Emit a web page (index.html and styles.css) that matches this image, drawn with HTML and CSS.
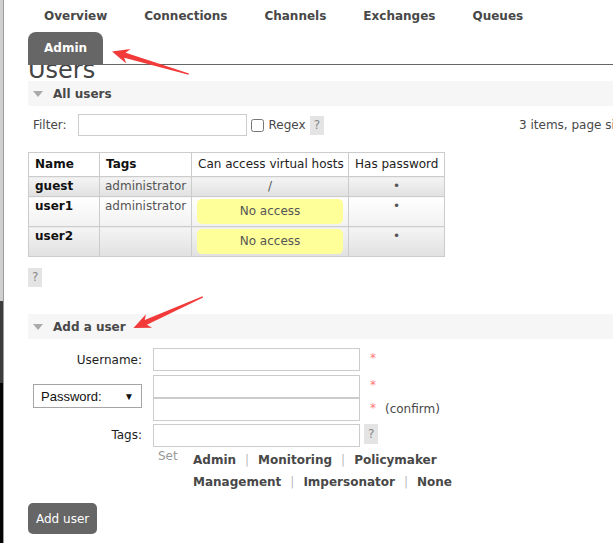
FILE: index.html
```html
<!DOCTYPE html>
<html>
<head>
<meta charset="utf-8">
<link rel="stylesheet" href="styles.css">
</head>
<body>
<div class="edge"></div>
<div class="page">
  <nav class="menu">
    <ul>
      <li><a href="#">Overview</a></li>
      <li><a href="#">Connections</a></li>
      <li><a href="#">Channels</a></li>
      <li><a href="#">Exchanges</a></li>
      <li><a href="#">Queues</a></li>
      <li><a href="#" class="active">Admin</a></li>
    </ul>
  </nav>
  <h1 class="title">Users</h1>

  <section class="section">
    <h2 class="bar"><span class="tri"></span>All users</h2>
    <div class="filter">
      <span>Filter:</span>
      <input class="text filter-input" type="text">
      <input class="check" type="checkbox">
      <span class="regex">Regex</span>
      <span class="help">?</span>
      <span class="count">3 items, page size up to: 100</span>
    </div>
    <table class="list">
      <colgroup>
        <col class="c1"><col class="c2"><col class="c3"><col class="c4">
      </colgroup>
      <thead>
        <tr>
          <th class="b">Name</th>
          <th class="b">Tags</th>
          <th>Can access virtual hosts</th>
          <th>Has password</th>
        </tr>
      </thead>
      <tbody>
        <tr class="alt1">
          <td class="name">guest</td>
          <td>administrator</td>
          <td class="c">/</td>
          <td class="c">•</td>
        </tr>
        <tr class="alt2">
          <td class="name">user1</td>
          <td>administrator</td>
          <td><span class="noaccess">No access</span></td>
          <td class="c">•</td>
        </tr>
        <tr class="alt1">
          <td class="name">user2</td>
          <td></td>
          <td><span class="noaccess">No access</span></td>
          <td class="c">•</td>
        </tr>
      </tbody>
    </table>
    <span class="help">?</span>
  </section>

  <section class="section add">
    <h2 class="bar"><span class="tri"></span>Add a user</h2>
    <form class="form">
      <div class="row">
        <label class="lab">Username:</label>
        <input class="text field" type="text">
        <span class="req">*</span>
      </div>
      <div class="row pw">
        <div class="select"><span>Password:</span><span class="caret">▼</span></div>
        <div class="pw-fields">
          <div class="sub">
            <input class="text field" type="password">
            <span class="req">*</span>
          </div>
          <div class="sub">
            <input class="text field" type="password">
            <span class="req">*</span>
            <span class="confirm">(confirm)</span>
          </div>
        </div>
      </div>
      <div class="row tags">
        <label class="lab">Tags:</label>
        <input class="text field" type="text">
        <span class="help tag-help">?</span>
      </div>
      <div class="setrow">
        <span class="set">Set</span>
        <div class="links">
          <div><a href="#">Admin</a><span class="sep">|</span><a href="#">Monitoring</a><span class="sep">|</span><a href="#">Policymaker</a></div>
          <div><a href="#">Management</a><span class="sep">|</span><a href="#">Impersonator</a><span class="sep">|</span><a href="#">None</a></div>
        </div>
      </div>
      <button type="button" class="btn">Add user</button>
    </form>
  </section>
</div>

<svg class="arrows" width="613" height="543" viewBox="0 0 613 543">
  <path transform="translate(112 51.5) rotate(196.4)" d="M0 0 L-17 -7.5 L-13.5 -2.6 L-80 -0.7 L-80 0.7 L-13.5 2.6 L-17 7.5 Z" fill="#f23a3a"/>
  <path transform="translate(133.5 328) rotate(155.8)" d="M0 0 L-17 -7.5 L-13.5 -2.6 L-76 -0.7 L-76 0.7 L-13.5 2.6 L-17 7.5 Z" fill="#f23a3a"/>
</svg>
</body>
</html>
```

FILE: styles.css
```css
* { box-sizing: border-box; }

html, body {
  margin: 0;
  width: 613px;
  height: 543px;
  overflow: hidden;
  background: #fff;
}

body {
  position: relative;
  font: 12px "DejaVu Sans", Verdana, sans-serif;
  color: #484848;
}

.edge {
  position: absolute;
  left: 0;
  top: 0;
  width: 4px;
  height: 543px;
  background: linear-gradient(to bottom, #cfcfcf 0, #cfcfcf 301px, #3c3c3c 301px, #3c3c3c 383px, #050505 383px);
  border-right: 1px solid #9a9a9a;
}

.page {
  padding-left: 28px;
  width: 700px;
}

/* menu */
.menu {
  position: relative;
  z-index: 1;
  background: #fff;
  border-bottom: 1px solid #666;
}
.menu ul {
  list-style: none;
  margin: 0;
  padding: 0;
  display: flex;
  flex-wrap: wrap;
  column-gap: 5px;
  width: 560px;
}
.menu a {
  display: block;
  padding: 0 16px;
  line-height: 32px;
  font-weight: bold;
  color: #484848;
  text-decoration: none;
}
.menu a.active {
  background: #666;
  color: #fff;
  border-radius: 8px 8px 0 0;
}

.title {
  margin: -7px 0 -1px;
  font-size: 24px;
  line-height: 24px;
  font-weight: normal;
  color: #444;
}

/* section bars */
.bar {
  margin: 0;
  height: 25px;
  padding-left: 5px;
  display: flex;
  align-items: center;
  gap: 10px;
  background: #f6f6f6;
  font-size: 12px;
  font-weight: bold;
  color: #484848;
}
.tri {
  width: 0;
  height: 0;
  border-left: 5px solid transparent;
  border-right: 5px solid transparent;
  border-top: 6px solid #aaa;
}

/* filter */
.filter {
  display: flex;
  align-items: center;
  height: 22px;
  margin: 8px 0 16px;
  padding-left: 5px;
  white-space: nowrap;
}
.text {
  height: 23px;
  border: 1px solid #ccc;
  padding: 0 3px;
  font: inherit;
  background: #fff;
}
.filter-input {
  width: 169px;
  height: 22px;
  margin-left: 11px;
}
.check {
  width: 13px;
  height: 13px;
  margin: 0 0 0 4px;
}
.regex { margin-left: 5px; }
.help {
  display: inline-block;
  height: 19px;
  line-height: 19px;
  padding: 0 4px;
  background: #e4e4e4;
  color: #888;
}
.filter .help { margin-left: 4px; }
.count { margin-left: 195px; }

/* table */
.list {
  border-collapse: collapse;
  table-layout: fixed;
  width: 417px;
  margin-bottom: 11px;
}
.c1 { width: 71px; }
.c2 { width: 92px; }
.c3 { width: 157px; }
.c4 { width: 96px; }
.list th {
  padding: 4px 6px;
  line-height: 15px;
  border: 1px solid #ccc;
  background: #fff;
  text-align: left;
  font-weight: normal;
  color: #222;
  white-space: nowrap;
}
.list th.b { font-weight: bold; color: #111; }
.list td {
  padding: 2px 5px;
  line-height: 15px;
  border: 1px solid #ccc;
  vertical-align: top;
  color: #555;
}
.list tr.alt1 td { background: linear-gradient(#f4f4f4, #e1e1e1); }
.list tr.alt2 td { background: linear-gradient(#ffffff, #f1f1f1); }
.list td.name { font-weight: bold; color: #111; padding-left: 6px; }
.list td.c { text-align: center; }
.noaccess {
  display: block;
  padding: 5px;
  line-height: 15px;
  background: #ffff99;
  border-radius: 5px;
  text-align: center;
  color: #555;
}

/* add user */
.add { margin-top: 27px; }
.form { padding-top: 9px; }
.row {
  display: flex;
  align-items: center;
  margin-bottom: 4px;
}
.lab {
  width: 114px;
  margin-right: 11px;
  text-align: right;
  color: #222;
}
.field { width: 207px; }
.req {
  align-self: flex-start;
  margin-left: 10px;
  margin-top: 4px;
  line-height: 12px;
  color: #f77;
}
.pw { align-items: flex-start; margin-bottom: 3px; }
.pw .select {
  width: 109px;
  height: 24px;
  margin: 9px 11px 0 5px;
  padding: 0 7px;
  display: flex;
  align-items: center;
  justify-content: space-between;
  border: 1px solid #a5a5a5;
  font: 13px "Liberation Sans", Arial, sans-serif;
  color: #111;
  background: #fff;
}
.caret { font-size: 10px; }
.pw-fields { display: flex; flex-direction: column; }
.sub { display: flex; align-items: flex-start; }
.confirm {
  margin-left: 9px;
  line-height: 23px;
  color: #484848;
}
.tags { margin-bottom: 0; align-items: flex-start; }
.tags .lab { line-height: 23px; }
.tag-help { margin-left: 4px; height: 20px; line-height: 20px; }

.setrow {
  display: flex;
  margin-top: 2px;
  padding-left: 130px;
}
.set {
  width: 35px;
  margin-top: 0;
  line-height: 15px;
  color: #999;
}
.links { line-height: 22px; }
.links a {
  font-weight: bold;
  color: #484848;
  text-decoration: none;
}
.sep {
  margin: 0 9px;
  color: #bbb;
}

.btn {
  display: block;
  margin-top: 10px;
  height: 31px;
  padding: 0 8px;
  border: none;
  border-radius: 5px;
  background: #666;
  color: #fff;
  font: 12px "DejaVu Sans", Verdana, sans-serif;
}

.arrows {
  position: absolute;
  left: 0;
  top: 0;
  z-index: 2;
  pointer-events: none;
}
```
